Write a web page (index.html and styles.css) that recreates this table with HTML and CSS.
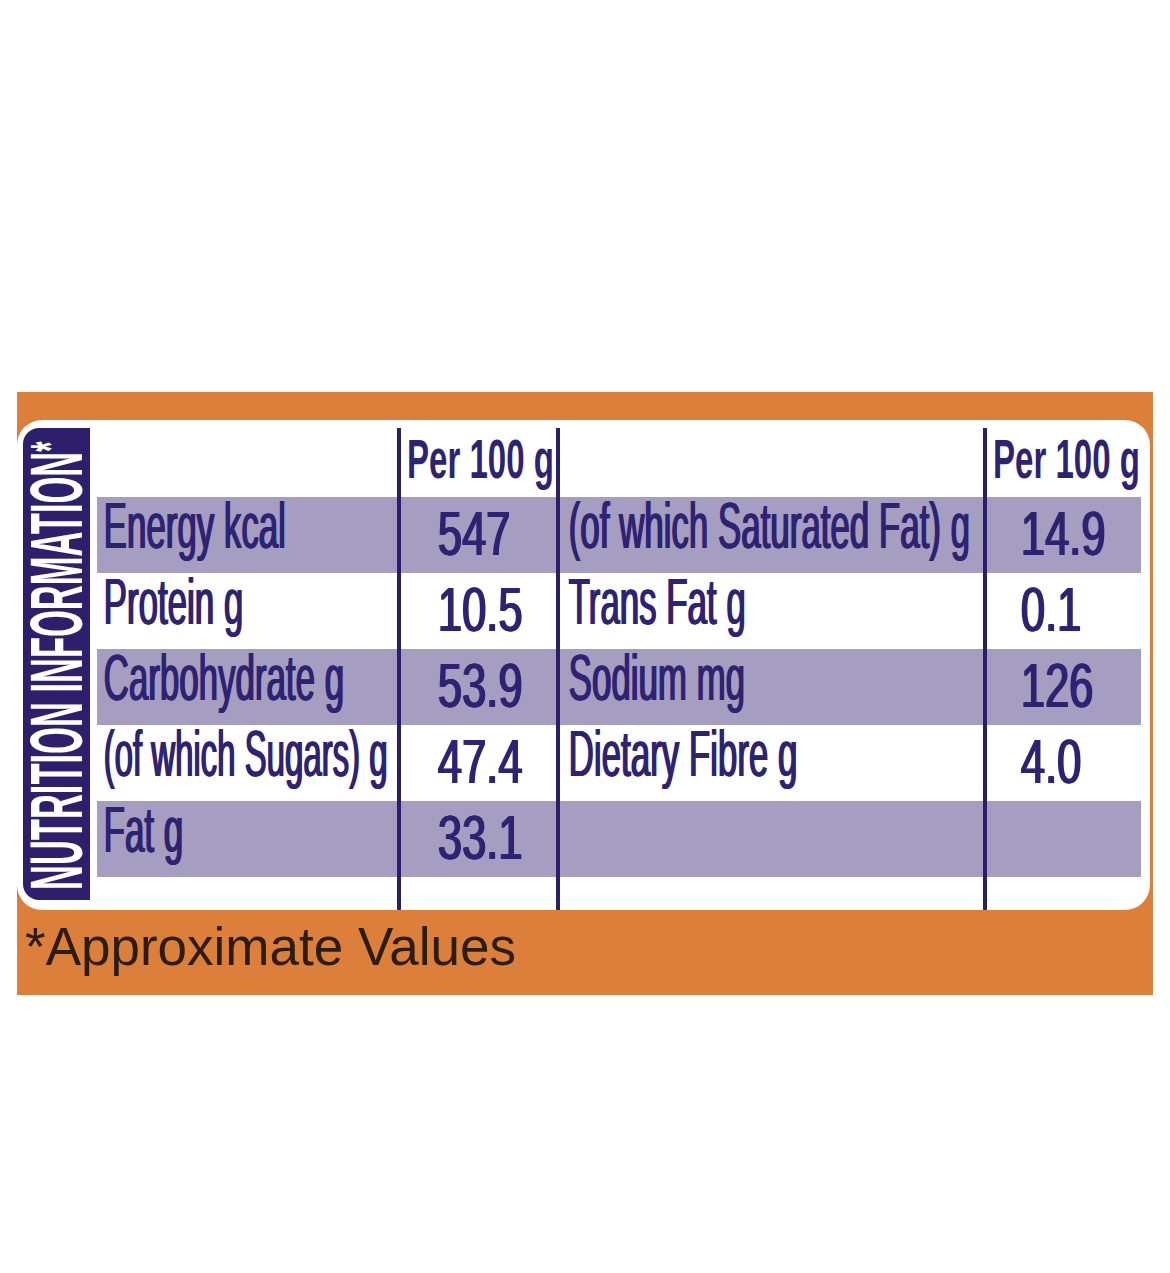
FILE: index.html
```html
<!DOCTYPE html>
<html lang="en">
<head>
  <meta charset="UTF-8" />
  <meta name="viewport" content="width=device-width, initial-scale=1.0" />
  <title>Nutrition Information</title>
  <link rel="stylesheet" href="styles.css">
</head>
<body>
  <div class="label">
    <div class="panel">
      <div class="side">
        <span class="side-text">NUTRITION INFORMATION<span class="star">*</span></span>
      </div>

      <div class="facts">
        <div class="row head">
          <div class="cell c1"></div>
          <div class="cell c2"><span class="hd">Per 100 g</span></div>
          <div class="cell c3"></div>
          <div class="cell c4"><span class="hd">Per 100 g</span></div>
        </div>
        <div class="row band">
          <div class="cell c1"><span class="txt">Energy kcal</span></div>
          <div class="cell c2"><span class="num">547</span></div>
          <div class="cell c3"><span class="txt">(of which Saturated Fat) g</span></div>
          <div class="cell c4"><span class="num">14.9</span></div>
        </div>
        <div class="row">
          <div class="cell c1"><span class="txt">Protein g</span></div>
          <div class="cell c2"><span class="num">10.5</span></div>
          <div class="cell c3"><span class="txt">Trans Fat g</span></div>
          <div class="cell c4"><span class="num">0.1</span></div>
        </div>
        <div class="row band">
          <div class="cell c1"><span class="txt">Carbohydrate g</span></div>
          <div class="cell c2"><span class="num">53.9</span></div>
          <div class="cell c3"><span class="txt">Sodium mg</span></div>
          <div class="cell c4"><span class="num">126</span></div>
        </div>
        <div class="row">
          <div class="cell c1"><span class="txt tight">(of which Sugars) g</span></div>
          <div class="cell c2"><span class="num">47.4</span></div>
          <div class="cell c3"><span class="txt">Dietary Fibre g</span></div>
          <div class="cell c4"><span class="num">4.0</span></div>
        </div>
        <div class="row band">
          <div class="cell c1"><span class="txt">Fat g</span></div>
          <div class="cell c2"><span class="num">33.1</span></div>
          <div class="cell c3"></div>
          <div class="cell c4"></div>
        </div>
        <div class="row tail">
          <div class="cell c1"></div>
          <div class="cell c2"></div>
          <div class="cell c3"></div>
          <div class="cell c4"></div>
        </div>
      </div>
    </div>

    <p class="foot">*Approximate Values</p>
  </div>
</body>
</html>
```

FILE: styles.css
```css
body {
  margin: 0;
  background: #fff;
  font-family: "Liberation Sans", Arial, sans-serif;
}
.label {
  width: 1136px;
  margin: 392px 0 0 17px;
  padding: 28px 3px 0 0;
  box-sizing: border-box;
  background: #dc7f3a;
}
.panel {
  display: flex;
  align-items: flex-start;
  height: 490px;
  background: #fff;
  border-radius: 25px;
  overflow: hidden;
}
/* vertical title, reads bottom to top */
.side {
  writing-mode: vertical-rl;
  transform: rotate(180deg);
  display: flex;
  justify-content: center;
  align-items: center;
  flex: none;
  width: 67px;
  height: 472px;
  margin: 8px 0 0 6px;
  background: #2d1f6c;
  border-radius: 0 16px 16px 0;
}
.side-text {
  flex: none;
  white-space: nowrap;
  color: #fff;
  font-weight: bold;
  font-size: 34.5px;
  line-height: 31px;
  transform: translate(2px, -2px) scaleX(2.145);
}
.star {
  font-size: 0.76em;
  vertical-align: 0.11em;
}
.facts {
  width: 1044px;
  margin: 8px 0 0 7px;
  color: #2e2372;
}
.row {
  display: flex;
  height: 76px;
}
.row.head {
  height: 69px;
}
.row.tail {
  height: 33px;
}
.band {
  background: #a69ec0;
}
.cell {
  box-sizing: border-box;
  height: 100%;
  white-space: nowrap;
}
.c1 {
  width: 300px;
  padding-left: 6px;
}
.c2 {
  width: 159px;
  padding-left: 36px;
  border-left: 4px solid #2b1e6b;
}
.c3 {
  width: 427px;
  padding-left: 8px;
  border-left: 4px solid #2b1e6b;
}
.c4 {
  width: 158px;
  padding-left: 33px;
  border-left: 4px solid #2b1e6b;
}
.head .c2, .head .c4 {
  padding-left: 6px;
}
.txt, .num, .hd {
  display: inline-block;
  transform-origin: left center;
}
.txt {
  font-size: 64px;
  line-height: 58px;
  transform: scaleX(0.545);
  text-shadow: 1.5px 0 0 currentColor, 2.5px 0 0 currentColor;
}
.txt.tight {
  transform: scaleX(0.515);
}
.num {
  font-size: 63px;
  line-height: 72px;
  transform: scaleX(0.69);
  text-shadow: 1.5px 0 0 currentColor, 2.5px 0 0 currentColor;
}
.hd {
  font-size: 56px;
  font-weight: bold;
  line-height: 61px;
  transform: scaleX(0.59);
}
.foot {
  margin: 0;
  height: 85px;
  box-sizing: border-box;
  padding: 7px 0 0 8px;
  font-size: 53px;
  line-height: 60px;
  color: #2b1c14;
}
```
